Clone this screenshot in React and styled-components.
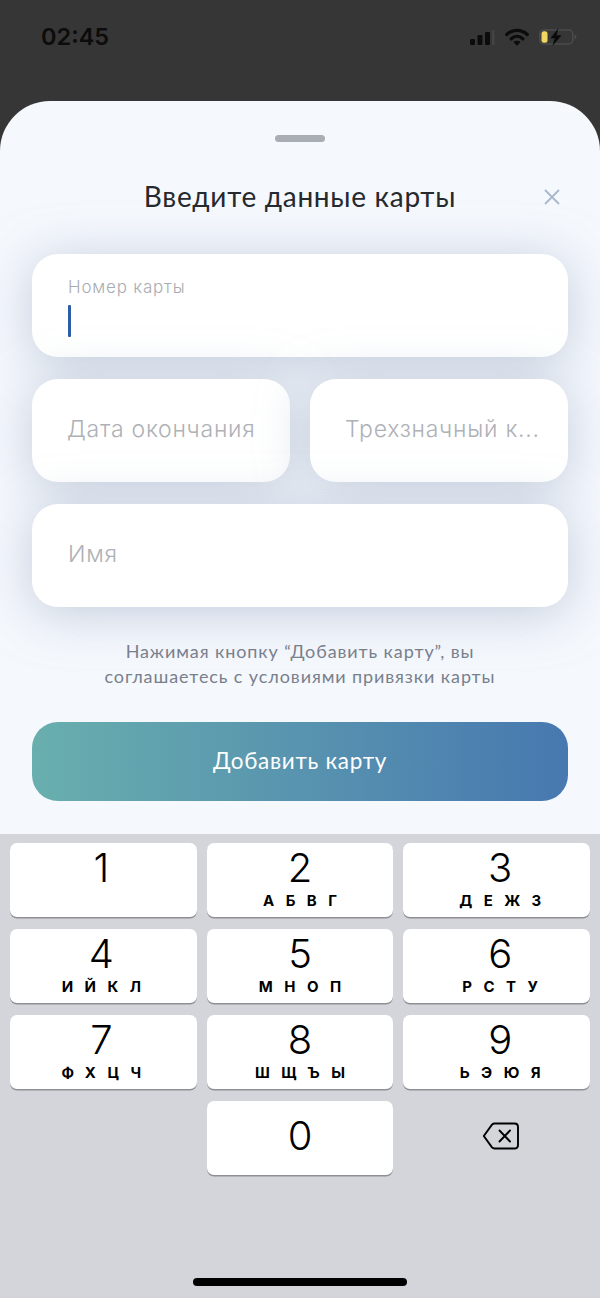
import styled, { createGlobalStyle } from 'styled-components';

const GlobalStyle = createGlobalStyle`
    html, body {
        margin: 0;
        padding: 0;
        background: #363636;
    }
    * {
        box-sizing: border-box;
    }
`;

const Screen = styled.div`
    display: flex;
    flex-direction: column;
    width: 600px;
    height: 1298px;
    overflow: hidden;
    background: #363636;
    font-family: "Lato", "Noto Sans", sans-serif;
`;

const StatusBar = styled.div`
    display: flex;
    justify-content: space-between;
    align-items: flex-start;
    height: 101px;
    padding: 22px 23px 0 41px;
`;

const Clock = styled.div`
    font-family: "Inter", sans-serif;
    font-size: 23.5px;
    font-weight: 600;
    line-height: 30px;
    color: #0c0c0c;
`;

const StatusIcons = styled.div`
    display: flex;
    align-items: center;
    gap: 10px;
    height: 30px;
`;

const Sheet = styled.div`
    display: flex;
    flex-direction: column;
    height: 733px;
    padding: 0 32px;
    background: #f5f8fd;
    border-radius: 50px 50px 0 0;
    overflow: hidden;
`;

const Handle = styled.div`
    align-self: center;
    flex: none;
    width: 50px;
    height: 7px;
    margin-top: 34px;
    border-radius: 4px;
    background: #a9aeb5;
`;

const TitleRow = styled.div`
    position: relative;
    display: flex;
    justify-content: center;
    align-items: center;
    flex: none;
    height: 40px;
    margin-top: 34px;
`;

const Title = styled.h1`
    margin: 0;
    font-size: 28px;
    font-weight: 400;
    letter-spacing: 0.7px;
    color: #26292e;
`;

const CloseButton = styled.div`
    position: absolute;
    right: 8px;
    top: 13px;
    display: flex;
`;

const Form = styled.div`
    display: grid;
    grid-template-columns: repeat(2, minmax(0, 1fr));
    gap: 22px 20px;
    margin-top: 38px;
`;

const Field = styled.div`
    grid-column: ${(p) => (p.$wide ? '1 / -1' : 'auto')};
    display: flex;
    flex-direction: column;
    justify-content: center;
    height: 103px;
    padding: 0 ${(p) => (p.$wide ? '36px 4px 36px' : '30px 4px 35px')};
    border-radius: 26px;
    background: #fff;
    box-shadow: 0 6px 50px rgba(165, 178, 200, 0.62);
`;

const FloatingLabel = styled.div`
    font-family: "Inter", sans-serif;
    font-size: 17px;
    font-weight: 300;
    line-height: 20px;
    letter-spacing: 0.8px;
    color: #a9acb1;
    margin-top: 7px;
`;

const Caret = styled.div`
    width: 3px;
    height: 32px;
    margin-top: 8px;
    border-radius: 1px;
    background: #2b5ea6;
`;

const Placeholder = styled.div`
    font-family: "Inter", sans-serif;
    font-size: 23px;
    font-weight: 300;
    letter-spacing: 0.75px;
    white-space: nowrap;
    color: #aeb1b6;
`;

const Note = styled.p`
    margin: 32px 0 0;
    font-size: 18px;
    line-height: 25px;
    letter-spacing: 0.9px;
    text-align: center;
    color: #78808c;
`;

const SubmitButton = styled.div`
    display: flex;
    justify-content: center;
    align-items: center;
    flex: none;
    height: 79px;
    margin-top: 33px;
    padding-bottom: 2px;
    border-radius: 26px;
    background: linear-gradient(90deg, #69afae 0%, #4778b0 100%);
    font-size: 22.5px;
    font-weight: 400;
    letter-spacing: 0.7px;
    color: #fff;
`;

const Keyboard = styled.div`
    flex: 1;
    display: flex;
    flex-direction: column;
    padding: 9px 10px 0;
    background: #d4d5da;
`;

const KeyGrid = styled.div`
    display: grid;
    grid-template-columns: repeat(3, 1fr);
    grid-auto-rows: 74px;
    gap: 12px 10px;
`;

const Key = styled.div`
    display: flex;
    flex-direction: column;
    align-items: center;
    padding-top: ${(p) => (p.$centered ? '11px' : '1px')};
    border-radius: 7px;
    background: #fff;
    box-shadow: 0 1.5px 0 #8f9096;
    font-family: "Inter", sans-serif;
    color: #000;

    &:nth-child(3n + 1) {
        padding-right: 4px;
    }
    &:nth-child(3n) {
        padding-left: 7px;
    }
`;

const Digit = styled.div`
    font-size: 40px;
    font-weight: 300;
    line-height: 47px;
`;

const Letters = styled.div`
    font-size: 15px;
    font-weight: 700;
    line-height: 17px;
    margin-top: 1px;
    letter-spacing: 11.500px;
    margin-right: -11.500px;
`;

const BackspaceKey = styled.div`
    display: flex;
    justify-content: center;
    align-items: center;
    padding: 0 0 5px 9px;
`;

const HomeBar = styled.div`
    align-self: center;
    width: 214px;
    height: 8px;
    margin-top: 103px;
    border-radius: 4px;
    background: #000;
`;

const SignalIcon = () => (
    <svg width="25" height="16" viewBox="0 0 25 16">
        <rect x="0" y="10" width="5" height="6" rx="1.2" fill="#0c0c0c" />
        <rect x="7.500" y="6" width="5" height="10" rx="1.2" fill="#0c0c0c" />
        <rect x="15" y="3" width="5" height="13" rx="1.2" fill="#0c0c0c" />
        <rect x="22" y="1" width="2.500" height="15" rx="1" fill="#444" />
    </svg>
);

const WifiIcon = () => (
    <svg width="24" height="18" viewBox="0 0 24 18" fill="none">
        <path d="M1.800 6.500C7.600 1 16.400 1 22.200 6.500" stroke="#0c0c0c" strokeWidth="3.400" strokeLinecap="round" />
        <path d="M6.200 10.800C9.600 7.500 14.400 7.500 17.800 10.800" stroke="#0c0c0c" strokeWidth="3.400" strokeLinecap="round" />
        <path d="M12 17.800L8.400 14C10.500 12.200 13.500 12.200 15.600 14Z" fill="#0c0c0c" />
    </svg>
);

const BatteryIcon = () => (
    <svg width="38" height="18" viewBox="0 0 38 18" fill="none">
        <rect x="0.800" y="2" width="33" height="14" rx="4" stroke="#4b4b4b" strokeWidth="1.500" />
        <path d="M35.500 6.500v5c1.200-.3 2-1.300 2-2.500s-.8-2.200-2-2.500Z" fill="#4b4b4b" />
        <rect x="2.500" y="3.200" width="6" height="11.600" rx="2.500" fill="#f1d563" />
        <path d="M19.500 0L11.500 10.200H15.800L13.500 18L22.500 7.300H17.500Z" fill="#0a0a0a" />
    </svg>
);

const CloseIcon = () => (
    <svg width="16" height="16" viewBox="0 0 16 16" fill="none">
        <path d="M1 1L15 15M15 1L1 15" stroke="#a9b8c9" strokeWidth="1.800" />
    </svg>
);

const BackspaceIcon = () => (
    <svg width="38" height="30" viewBox="0 0 38 30" fill="none">
        <path
            d="M12.500 2.500H32.500C34.500 2.500 36 4 36 6V24C36 26 34.500 27.500 32.500 27.500H12.500C11.500 27.500 10.700 27.100 10 26.400L1.800 15L10 3.600C10.700 2.900 11.500 2.500 12.500 2.500Z"
            stroke="#000"
            strokeWidth="1.900"
            strokeLinejoin="round"
        />
        <path d="M17.500 9.500L28 20.500M28 9.500L17.500 20.500" stroke="#000" strokeWidth="1.900" strokeLinecap="round" />
    </svg>
);

const keys = [
    { digit: '1', letters: '' },
    { digit: '2', letters: 'АБВГ' },
    { digit: '3', letters: 'ДЕЖЗ' },
    { digit: '4', letters: 'ИЙКЛ' },
    { digit: '5', letters: 'МНОП' },
    { digit: '6', letters: 'РСТУ' },
    { digit: '7', letters: 'ФХЦЧ' },
    { digit: '8', letters: 'ШЩЪЫ' },
    { digit: '9', letters: 'ЬЭЮЯ' },
];

const App = () => {
    return (
        <Screen>
            <GlobalStyle />
            <StatusBar>
                <Clock>02:45</Clock>
                <StatusIcons>
                    <SignalIcon />
                    <WifiIcon />
                    <BatteryIcon />
                </StatusIcons>
            </StatusBar>
            <Sheet>
                <Handle />
                <TitleRow>
                    <Title>Введите данные карты</Title>
                    <CloseButton><CloseIcon /></CloseButton>
                </TitleRow>
                <Form>
                    <Field $wide>
                        <FloatingLabel>Номер карты</FloatingLabel>
                        <Caret />
                    </Field>
                    <Field><Placeholder>Дата окончания</Placeholder></Field>
                    <Field><Placeholder>Трехзначный к...</Placeholder></Field>
                    <Field $wide><Placeholder>Имя</Placeholder></Field>
                </Form>
                <Note>
                    Нажимая кнопку “Добавить карту”, вы<br />
                    соглашаетесь с условиями привязки карты
                </Note>
                <SubmitButton>Добавить карту</SubmitButton>
            </Sheet>
            <Keyboard>
                <KeyGrid>
                    {keys.map((k) => (
                        <Key key={k.digit}>
                            <Digit>{k.digit}</Digit>
                            <Letters>{k.letters}</Letters>
                        </Key>
                    ))}
                    <div />
                    <Key $centered><Digit>0</Digit></Key>
                    <BackspaceKey><BackspaceIcon /></BackspaceKey>
                </KeyGrid>
                <HomeBar />
            </Keyboard>
        </Screen>
    );
};

export default App;
